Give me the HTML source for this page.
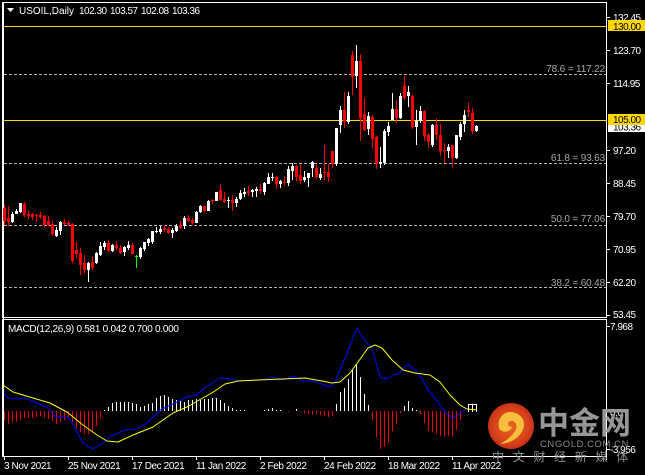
<!DOCTYPE html>
<html><head><meta charset="utf-8"><style>
html,body{margin:0;padding:0;background:#000}
svg{display:block}
text{font-family:"Liberation Sans","Noto Sans CJK SC",sans-serif;font-size:10px;fill:#fff}
.a{letter-spacing:-.5px}
.d{letter-spacing:-.4px}
.f{fill:#a8a8a8;letter-spacing:-.15px;text-anchor:end}
.k{fill:#000;letter-spacing:-.5px}
</style></head><body>
<svg width="645" height="475" viewBox="0 0 645 475" xmlns="http://www.w3.org/2000/svg">
<defs><radialGradient id="g" cx="50%" cy="50%" r="50%"><stop offset="0" stop-color="#e8641f"/><stop offset=".75" stop-color="#d8421b"/><stop offset="1" stop-color="#c5301a"/></radialGradient></defs>
<rect width="645" height="475" fill="#000"/>
<g shape-rendering="crispEdges">
<path fill="none" stroke="#fff" d="M3 2.5H606.5V317.5H2.5V2M2.5 319.5H606.5V456.5H2.5V319" stroke-width="1"/>
<path fill="none" stroke="#fff" d="M3.5 2V457M606.5 456.5V460M4.5 457V460M68.5 457V460M132.5 457V460M196.5 457V460M260.5 457V460M324.5 457V460M388.5 457V460M452.5 457V460M607 17.5h3M607 50.5h3M607 83.5h3M607 150.5h3M607 183.5h3M607 216.5h3M607 249.5h3M607 282.5h3M607 315.5h3M607 326.5h3M607 449.5h3"/>
<path fill="none" stroke="#b4b4b4" stroke-dasharray="3 2" d="M4 74.5H606M4 163.5H606M4 225.5H606M4 287.5H606"/>
<path fill="none" stroke="#ffd700" d="M4 26.5H607M4 120.5H607"/>
<!-- red wicks -->
<path fill="none" stroke="#f00" d="M4.5 205V225M8.5 206V226M24.5 202V217M28.5 211V219M32.5 213V220M36.5 214V222M40.5 212V219M44.5 215V227M48.5 216V226M52.5 220V236M64.5 219V225M68.5 221V226M72.5 223V263M76.5 242V258M80.5 248V275M84.5 255V273M92.5 256V270M108.5 240V252M116.5 241V250M120.5 245V254M132.5 243V254M164.5 225V232M168.5 227V234M180.5 221V229M188.5 215V222M192.5 218V225M204.5 206V212M212.5 199V204M220.5 184V201M224.5 192V203M232.5 195V211M248.5 186V196M260.5 184V194M276.5 176V189M284.5 176V186M296.5 165V181M300.5 165V184M316.5 165V179M324.5 145V180M328.5 164V182M332.5 151V168M344.5 92V128M352.5 51V95M360.5 54V141M364.5 98V131M372.5 115V148M376.5 136V169M396.5 100V123M404.5 76V100M412.5 94V129M424.5 110V141M428.5 133V148M436.5 118V140M440.5 124V156M444.5 143V163M452.5 145V167M468.5 102V117M472.5 108V134"/>
<!-- red bodies -->
<path fill="none" stroke="#f00" stroke-width="3" d="M4.5 208V221M8.5 218V222M24.5 204V215M28.5 214V216M32.5 214V217M36.5 215V216M40.5 215V217M44.5 216V225M48.5 221V225M52.5 224V234M64.5 222V224M68.5 223V225M72.5 224V261M76.5 250V254M80.5 253V265M84.5 263V270M92.5 262V268M108.5 243V251M116.5 245V248M120.5 248V253M132.5 245V254M164.5 228V230M168.5 229V233M180.5 225V228M188.5 218V221M192.5 220V223M204.5 206V211M212.5 200V201M220.5 190V200M224.5 199V202M232.5 200V203M248.5 191V193M260.5 189V191M276.5 177V184M284.5 182V183M296.5 166V177M300.5 175V181M316.5 168V177M324.5 172V173M328.5 172V177M332.5 151V164M344.5 110V122M352.5 55V77M360.5 61V118M364.5 114V130M372.5 117V139M376.5 137V164M396.5 109V118M404.5 85V98M412.5 96V127M424.5 111V136M428.5 135V142M436.5 125V135M440.5 135V151M444.5 150V151M452.5 145V158M468.5 110V112M472.5 113V131"/>
<!-- white wicks -->
<path fill="none" stroke="#fff" d="M12.5 212V223M16.5 209V214M20.5 203V213M56.5 227V237M60.5 221V235M88.5 262V282M96.5 252V264M100.5 242V256M104.5 241V250M112.5 244V252M124.5 246V256M128.5 241V250M140.5 247V259M144.5 242V251M148.5 238V246M152.5 231V244M156.5 227V233M160.5 226V234M172.5 228V238M176.5 224V232M184.5 216V229M196.5 211V223M200.5 205V213M208.5 200V211M216.5 192V201M228.5 197V208M236.5 197V207M240.5 190V200M244.5 188V197M252.5 189V197M256.5 187V197M264.5 182V195M268.5 173V184M272.5 173V181M280.5 180V188M288.5 166V186M292.5 163V180M304.5 171V182M308.5 173V187M312.5 161V177M320.5 168V180M336.5 128V166M340.5 106V133M348.5 92V124M356.5 45V88M368.5 112V135M380.5 147V168M384.5 129V165M388.5 122V136M392.5 93V120M400.5 93V119M408.5 86V107M416.5 110V145M420.5 106V123M432.5 124V147M448.5 144V158M456.5 135V159M460.5 122V140M464.5 110V132M476.5 125V132"/>
<!-- white bodies -->
<path fill="none" stroke="#fff" stroke-width="3" d="M12.5 214V222M16.5 211V214M20.5 203V212M56.5 230V236M60.5 222V231M88.5 263V270M96.5 253V263M100.5 246V255M104.5 243V247M112.5 245V251M124.5 247V252M128.5 245V248M140.5 248V257M144.5 242V249M148.5 239V243M152.5 231V242M156.5 231V232M160.5 229V232M172.5 230V233M176.5 226V231M184.5 218V226M196.5 212V223M200.5 206V212M208.5 201V211M216.5 192V201M228.5 200V201M236.5 199V203M240.5 193V199M244.5 192V194M252.5 190V192M256.5 189V191M264.5 183V192M268.5 177V184M272.5 177V178M280.5 181V184M288.5 169V183M292.5 166V171M304.5 177V180M308.5 173V178M312.5 162V168M320.5 174V178M336.5 128V164M340.5 110V125M348.5 96V122M356.5 61V76M368.5 116V129M380.5 162V164M384.5 131V163M388.5 126V132M392.5 109V120M400.5 96V118M408.5 92V96M416.5 121V127M420.5 111V121M432.5 125V145M448.5 147V151M456.5 135V158M460.5 124V137M464.5 115V124M476.5 126V131"/>
<path fill="none" stroke="#00ff00" d="M136.5 255V268M135 256.5h3"/>
<!-- MACD histogram -->
<path fill="none" stroke="#e00" d="M4.5 411V420M8.5 411V424M12.5 411V422M16.5 411V422M20.5 411V420M24.5 411V418M28.5 411V418M32.5 411V418M36.5 411V417M40.5 411V416M44.5 411V418M48.5 411V419M52.5 411V421M56.5 411V424M60.5 411V422M64.5 411V420M68.5 411V417M72.5 411V422M76.5 411V428M80.5 411V432M84.5 411V434M88.5 411V434M92.5 411V432M96.5 411V426M100.5 411V418M288.5 411V412M300.5 411V412M304.5 411V413M308.5 411V414M312.5 411V415M316.5 411V414M320.5 411V415M324.5 411V416M328.5 411V417M332.5 411V416M372.5 411V420M376.5 411V437M380.5 411V449M384.5 411V447M388.5 411V442M392.5 411V431M396.5 411V424M400.5 411V413M420.5 411V414M424.5 411V423M428.5 411V431M432.5 411V432M436.5 411V434M440.5 411V436M444.5 411V437M448.5 411V436M452.5 411V437M456.5 411V430M460.5 411V420"/>
<path fill="none" stroke="#fff" d="M104.5 410V411M108.5 407V411M112.5 403V411M116.5 402V411M120.5 402V411M124.5 402V411M128.5 402V411M132.5 403V411M136.5 404V411M140.5 407V411M144.5 406V411M148.5 404V411M152.5 403V411M156.5 398V411M160.5 396V411M164.5 395V411M168.5 397V411M172.5 399V411M176.5 400V411M180.5 401V411M184.5 402V411M188.5 400V411M192.5 400V411M196.5 399V411M200.5 400V411M204.5 399V411M208.5 399V411M212.5 398V411M216.5 398V411M220.5 400V411M224.5 403V411M228.5 406V411M232.5 408V411M236.5 410V411M240.5 410V411M244.5 410V411M264.5 410V411M268.5 409V411M272.5 408V411M276.5 410V411M280.5 410V411M296.5 409V411M336.5 404V411M340.5 392V411M344.5 388V411M348.5 379V411M352.5 369V411M356.5 365V411M360.5 377V411M364.5 394V411M368.5 405V411M404.5 406V411M408.5 401V411M412.5 408V411M416.5 410V411M468.5 404V412M472.5 404V412M476.5 404V412M468 404.5h9"/>
</g>
<path fill="none" stroke="#0000ff" stroke-linejoin="round" d="M4 393L8 398L17 399L25 398L37 403L48 408L55 417L68 417L75 428L83 443L93 449L100 445L113 435L125 430L137 429L147 423L160 410L177 402L187 397L197 395L203 389L215 381L220 378L230 379L242 381L262 380L272 377L285 380L293 376L303 381L312 381L322 384L330 387L335 382L345 358L357 328L363 338L372 348L380 377L387 379L393 375L398 374L408 364L417 372L423 380L428 390L438 402L445 412L453 418L460 413L467 408"/>
<path fill="none" stroke="#ffff00" stroke-linejoin="round" d="M3 385L13 392L33 398L50 403L67 412L83 425L97 435L107 441L118 442L133 435L153 427L173 413L187 407L215 391L225 384L238 381L258 380L282 379L305 378L322 381L332 383L340 382L350 373L358 362L368 348L375 345L382 348L392 360L403 370L415 373L430 375L440 382L450 395L460 405L467 409L477 410"/>
<!-- title -->
<path d="M7 8h7l-3.5 4z" fill="#fff"/>
<text x="19" y="14">USOIL,Daily</text>
<text x="79" y="14" class="a">102.30</text>
<text x="110" y="14" class="a">103.57</text>
<text x="141" y="14" class="a">102.08</text>
<text x="172" y="14" class="a">103.36</text>
<text x="8" y="332" style="letter-spacing:-.27px">MACD(12,26,9) 0.581 0.042 0.700 0.000</text>
<!-- fib labels -->
<text x="605" y="72" class="f">78.6 = 117.22</text>
<text x="605" y="161" class="f">61.8 = 93.63</text>
<text x="605" y="222" class="f">50.0 = 77.06</text>
<text x="605" y="286" class="f">38.2 = 60.48</text>
<!-- axis labels -->
<text x="613" y="21" class="a">132.45</text>
<text x="613" y="54" class="a">123.70</text>
<text x="613" y="87" class="a">114.95</text>
<text x="613" y="154" class="a">97.20</text>
<text x="613" y="187" class="a">88.45</text>
<text x="613" y="220" class="a">79.70</text>
<text x="613" y="253" class="a">70.95</text>
<text x="613" y="286" class="a">62.20</text>
<text x="613" y="318" class="a">53.45</text>
<text x="610" y="330" class="a">7.968</text>
<text x="610" y="416" class="a">0.0</text>
<text x="610" y="453" class="a">-3.956</text>
<rect x="608" y="125" width="37" height="7" fill="#fff"/>
<text x="613" y="130.5" class="k">103.36</text>
<rect x="608" y="114" width="37" height="11" fill="#ffd700"/>
<text x="613" y="123" class="k">105.00</text>
<rect x="608" y="20" width="37" height="11" fill="#ffd700"/>
<text x="613" y="30" class="k">130.00</text>
<!-- dates -->
<text x="4" y="469" class="d">3 Nov 2021</text>
<text x="68" y="469" class="d">25 Nov 2021</text>
<text x="132" y="469" class="d">17 Dec 2021</text>
<text x="196" y="469" class="d">11 Jan 2022</text>
<text x="260" y="469" class="d">2 Feb 2022</text>
<text x="324" y="469" class="d">24 Feb 2022</text>
<text x="388" y="469" class="d">18 Mar 2022</text>
<text x="452" y="469" class="d">11 Apr 2022</text>
<!-- watermark -->
<circle cx="511" cy="426" r="23" fill="url(#g)"/>
<path d="M499 427C497 420 503 412 510 412C517 412 524 417 524 424C524 434 514 443 500 444C507 440 512 436 515 431C518 427 516 421 512 421C508 421 507 424 509 426C511 428 512 426 512 427C511 431 505 433 502 431C500 430 499 429 499 427Z" fill="#f7bd3c"/>
<text x="538" y="434" style="font-size:31px;font-weight:bold;fill:#969696">中金网</text>
<text x="540" y="447" style="font-size:9.5px;fill:#8a8a8a;letter-spacing:.55px">CNGOLD.COM.CN</text>
<text x="492" y="461" style="font-size:12px;fill:#909090;letter-spacing:8.7px">中文财经新媒体</text>
</svg>
</body></html>
